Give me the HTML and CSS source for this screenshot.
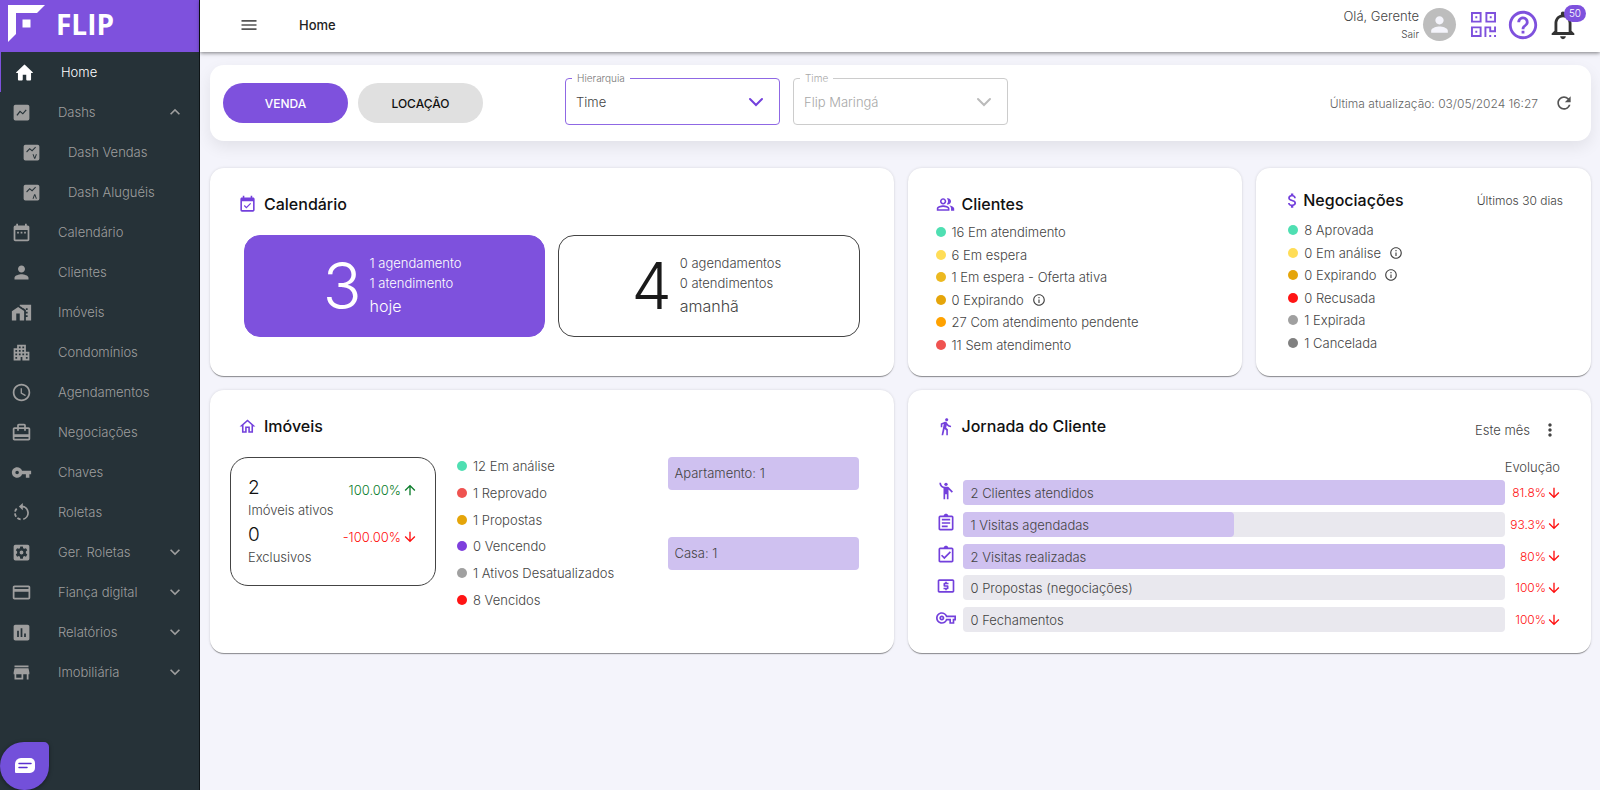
FILE: index.html
```html
<!DOCTYPE html>
<html lang="pt-BR">
<head>
  <meta charset="UTF-8" />
  <meta name="viewport" content="width=device-width, initial-scale=1" />
  <title>FLIP - Home</title>
  <link rel="stylesheet" href="styles.css">
</head>
<body>
  <!-- icons -->
  <svg class="sprite" aria-hidden="true">
    <symbol id="i-home" viewBox="0 0 24 24"><path d="M10 20v-5.500h4V20c0 .6.400 1 1 1h3.500c.6 0 1-.4 1-1v-7.500h1.600c.500 0 .7-.6.300-.9L12.700 3.300a1 1 0 0 0-1.400 0L2.600 11.600c-.4.300-.2.900.3.900h1.600V20c0 .6.400 1 1 1H9c.6 0 1-.4 1-1z"/></symbol>
    <symbol id="i-dash" viewBox="0 0 24 24"><path fill-rule="evenodd" d="M5 3h14a2 2 0 0 1 2 2v14a2 2 0 0 1-2 2H5a2 2 0 0 1-2-2V5a2 2 0 0 1 2-2zm2.400 12.600 3-4 3.200 2.700 4.300-4.900-1-.9-3.500 4-3.200-2.700-4 5.100z"/></symbol>
    <symbol id="i-dash-v" viewBox="0 0 24 24"><path fill-rule="evenodd" d="M5 3h14a2 2 0 0 1 2 2v14a2 2 0 0 1-2 2H5a2 2 0 0 1-2-2V5a2 2 0 0 1 2-2zm1.800 8.900 3.200-3.400 2.700 2.300 4.400-4.600-.8-.8-3.700 3.800-2.700-2.300L6 10.900zM13.200 14l1.900 5h1.200l1.900-5H17l-1.300 3.600-1.300-3.600z"/></symbol>
    <symbol id="i-dash-a" viewBox="0 0 24 24"><path fill-rule="evenodd" d="M5 3h14a2 2 0 0 1 2 2v14a2 2 0 0 1-2 2H5a2 2 0 0 1-2-2V5a2 2 0 0 1 2-2zm1.800 8.900 3.200-3.400 2.700 2.300 4.400-4.600-.8-.8-3.700 3.800-2.700-2.300L6 10.900zM13.200 19l1.900-5h1.200l1.900 5H17l-1.300-3.600-1.300 3.600z"/></symbol>
    <symbol id="i-calendar" viewBox="0 0 24 24"><path d="M9 11H7v2h2v-2zm4 0h-2v2h2v-2zm4 0h-2v2h2v-2zm2-7h-1V2h-2v2H8V2H6v2H5a2 2 0 0 0-2 2v14c0 1.100.9 2 2 2h14c1.100 0 2-.9 2-2V6c0-1.100-.9-2-2-2zm0 16H5V9h14v11z"/></symbol>
    <symbol id="i-person" viewBox="0 0 24 24"><path d="M12 12c2.210 0 4-1.790 4-4s-1.790-4-4-4-4 1.790-4 4 1.790 4 4 4zm0 2c-2.670 0-8 1.340-8 4v2h16v-2c0-2.660-5.330-4-8-4z"/></symbol>
    <symbol id="i-homework" viewBox="0 0 24 24"><path fill-rule="evenodd" d="M8.170 5.700 1 10.480V21h5v-8h4v8h5V10.250zM10 3v1.510l2 1.330L13.730 7H15v.850l2 1.340V11h2v2h-2v2h2v2h-2v4h6V3H10zm9 6h-2V7h2v2z"/></symbol>
    <symbol id="i-building" viewBox="0 0 24 24"><path d="M17 11V3H7v4H3v14h8v-4h2v4h8V11h-4zM7 19H5v-2h2v2zm0-4H5v-2h2v2zm0-4H5V9h2v2zm4 4H9v-2h2v2zm0-4H9V9h2v2zm0-4H9V5h2v2zm4 8h-2v-2h2v2zm0-4h-2V9h2v2zm0-4h-2V5h2v2zm4 12h-2v-2h2v2zm0-4h-2v-2h2v2z"/></symbol>
    <symbol id="i-clock" viewBox="0 0 24 24"><path d="M11.990 2C6.470 2 2 6.480 2 12s4.470 10 9.990 10C17.520 22 22 17.520 22 12S17.520 2 11.990 2zM12 20c-4.420 0-8-3.580-8-8s3.580-8 8-8 8 3.580 8 8-3.580 8-8 8zm.5-13H11v6l5.250 3.150.75-1.230-4.500-2.670z"/></symbol>
    <symbol id="i-bag" viewBox="0 0 24 24"><path d="M20 6h-3V4c0-1.110-.89-2-2-2H9c-1.110 0-2 .89-2 2v2H4c-1.110 0-2 .89-2 2v11c0 1.110.89 2 2 2h16c1.110 0 2-.89 2-2V8c0-1.110-.89-2-2-2zM9 4h6v2H9V4zm11 15H4v-2h16v2zm0-5H4V8h3v2h2V8h6v2h2V8h3v6z"/></symbol>
    <symbol id="i-key" viewBox="0 0 24 24"><path d="M12.650 10C11.830 7.670 9.610 6 7 6c-3.310 0-6 2.690-6 6s2.690 6 6 6c2.610 0 4.830-1.670 5.650-4H17v4h4v-4h2v-4H12.650zM7 14c-1.100 0-2-.9-2-2s.9-2 2-2 2 .9 2 2-.9 2-2 2z"/></symbol>
    <symbol id="i-rotate" viewBox="0 0 24 24"><g fill="none" stroke="currentColor" stroke-width="2"><path d="M12.500 5a7.500 7.500 0 0 1 1.500 14.700"/><path d="M11 19.900a7.500 7.500 0 0 1-6.500-7.400A7.500 7.500 0 0 1 7 7" stroke-dasharray="4 2"/></g><path d="M13.500 1v8.500L9 5.200z"/></symbol>
    <symbol id="i-gearbox" viewBox="0 0 24 24"><path fill-rule="evenodd" d="M5 3h14a2 2 0 0 1 2 2v14a2 2 0 0 1-2 2H5a2 2 0 0 1-2-2V5a2 2 0 0 1 2-2zm5.600 2-.4 2-1.200.7-2-.7-1.500 2.500 1.500 1.400v1.900l-1.500 1.400L7 16.800l2-.7 1.200.7.4 2.200h2.900l.4-2.200 1.200-.7 2 .7 1.500-2.600-1.600-1.400v-1.900L18.600 9.500 17.100 7l-2 .7-1.200-.7-.4-2zM12 9.800a2.200 2.200 0 1 1 0 4.400 2.200 2.200 0 0 1 0-4.400z"/></symbol>
    <symbol id="i-card" viewBox="0 0 24 24"><path d="M20 4H4c-1.110 0-2 .89-2 2v12c0 1.110.89 2 2 2h16c1.110 0 2-.89 2-2V6c0-1.110-.89-2-2-2zm0 14H4v-7h16v7zm0-10H4V6h16v2z"/></symbol>
    <symbol id="i-report" viewBox="0 0 24 24"><path d="M19 3H5c-1.100 0-2 .9-2 2v14c0 1.100.9 2 2 2h14c1.100 0 2-.9 2-2V5c0-1.100-.9-2-2-2zM9 17H7v-7h2v7zm4 0h-2V7h2v10zm4 0h-2v-4h2v4z"/></symbol>
    <symbol id="i-store" viewBox="0 0 24 24"><path d="M20 4H4v2h16V4zm1 10v-2l-1-5H4l-1 5v2h1v6h10v-6h4v6h2v-6h1zm-9 4H6v-4h6v4z"/></symbol>
    <symbol id="i-down" viewBox="0 0 24 24"><path d="M7.410 8.590 12 13.170l4.590-4.580L18 10l-6 6-6-6z"/></symbol>
    <symbol id="i-up" viewBox="0 0 24 24"><path d="M7.410 15.410 12 10.830l4.590 4.580L18 14l-6-6-6 6z"/></symbol>
    <symbol id="i-chevron" viewBox="0 0 24 24"><path d="m6 9 6 6 6-6" fill="none" stroke="currentColor" stroke-width="2" stroke-linecap="round"/></symbol>
    <symbol id="i-menu" viewBox="0 0 24 24"><path d="M3 18h18v-2H3v2zm0-5h18v-2H3v2zm0-7v2h18V6H3z"/></symbol>
    <symbol id="i-qr" viewBox="0 0 26 26"><g fill="none" stroke="currentColor" stroke-width="2"><path d="M1 1h9v9H1zM16 1h9v9h-9zM1 16h9v9H1zM15 26V16h5v4h5v-5"/></g><path d="M4.500 4.500h2v2h-2zM19.500 4.500h2v2h-2zM4.500 19.500h2v2h-2zM19 24h2v2h-2zM24 24h2v2h-2z"/></symbol>
    <symbol id="i-help" viewBox="0 0 24 24"><path d="M11 18h2v-2h-2v2zm1-16C6.480 2 2 6.480 2 12s4.480 10 10 10 10-4.480 10-10S17.520 2 12 2zm0 18c-4.410 0-8-3.590-8-8s3.590-8 8-8 8 3.590 8 8-3.590 8-8 8zm0-14c-2.210 0-4 1.790-4 4h2c0-1.100.9-2 2-2s2 .9 2 2c0 2-3 1.750-3 5h2c0-2.250 3-2.500 3-5 0-2.210-1.790-4-4-4z"/></symbol>
    <symbol id="i-bell" viewBox="0 0 24 24"><path d="M12 22c1.100 0 2-.9 2-2h-4c0 1.100.9 2 2 2zm6-6v-5c0-3.070-1.630-5.640-4.500-6.320V4c0-.83-.67-1.500-1.500-1.500s-1.500.67-1.500 1.500v.68C7.640 5.360 6 7.920 6 11v5l-2 2v1h16v-1l-2-2zm-2 1H8v-6c0-2.480 1.510-4.500 4-4.500s4 2.020 4 4.500v6z"/></symbol>
    <symbol id="i-refresh" viewBox="0 0 24 24"><path d="M17.650 6.350A7.958 7.958 0 0 0 12 4c-4.420 0-7.990 3.580-7.990 8s3.570 8 7.990 8c3.730 0 6.840-2.550 7.730-6h-2.080A5.990 5.990 0 0 1 12 18c-3.310 0-6-2.690-6-6s2.690-6 6-6c1.660 0 3.140.69 4.220 1.780L13 11h7V4l-2.350 2.350z"/></symbol>
    <symbol id="i-available" viewBox="0 0 24 24"><path d="m16.530 11.060-1.060-1.060-4.880 4.880-2.120-2.120-1.060 1.060L10.590 17l5.940-5.940zM19 3h-1V1h-2v2H8V1H6v2H5c-1.110 0-1.990.9-1.990 2L3 19a2 2 0 0 0 2 2h14c1.100 0 2-.9 2-2V5c0-1.100-.9-2-2-2zm0 16H5V8h14v11z"/></symbol>
    <symbol id="i-people" viewBox="0 0 24 24"><path d="M16.670 13.130C18.040 14.060 19 15.320 19 17v3h4v-3c0-2.180-3.570-3.470-6.330-3.870zM15 12c2.210 0 4-1.790 4-4s-1.790-4-4-4c-.47 0-.91.100-1.330.240a5.980 5.980 0 0 1 0 7.520c.42.140.86.240 1.330.240zM9 12c2.210 0 4-1.790 4-4s-1.790-4-4-4-4 1.790-4 4 1.790 4 4 4zm0-6c1.100 0 2 .9 2 2s-.9 2-2 2-2-.9-2-2 .9-2 2-2zM9 13c-2.670 0-8 1.340-8 4v3h16v-3c0-2.660-5.330-4-8-4zm6 5H3v-.99C3.200 16.290 6.300 15 9 15s5.800 1.290 6 2v1z"/></symbol>
    <symbol id="i-money" viewBox="0 0 24 24"><path d="M11.800 10.900c-2.270-.59-3-1.200-3-2.150 0-1.090 1.010-1.850 2.700-1.850 1.780 0 2.440.85 2.500 2.100h2.210c-.07-1.720-1.120-3.300-3.210-3.810V3h-3v2.160c-1.940.42-3.500 1.680-3.500 3.610 0 2.310 1.910 3.460 4.700 4.130 2.500.6 3 1.480 3 2.410 0 .69-.49 1.790-2.700 1.790-2.060 0-2.870-.92-2.980-2.100h-2.200c.12 2.190 1.760 3.420 3.680 3.830V21h3v-2.150c1.950-.37 3.500-1.500 3.500-3.550 0-2.840-2.430-3.810-4.700-4.400z"/></symbol>
    <symbol id="i-info" viewBox="0 0 24 24"><path d="M11 7h2v2h-2zm0 4h2v6h-2zm1-9C6.480 2 2 6.480 2 12s4.480 10 10 10 10-4.480 10-10S17.520 2 12 2zm0 18c-4.410 0-8-3.590-8-8s3.590-8 8-8 8 3.590 8 8-3.590 8-8 8z"/></symbol>
    <symbol id="i-house" viewBox="0 0 24 24"><path d="M12 3 2 12h3v8h6v-6h2v6h6v-8h3L12 3zm5 15h-2v-6H9v6H7v-7.810l5-4.500 5 4.500V18z"/></symbol>
    <symbol id="i-walk" viewBox="0 0 24 24"><path d="M13.500 5.500c1.100 0 2-.9 2-2s-.9-2-2-2-2 .9-2 2 .9 2 2 2zM9.800 8.900 7 23h2.100l1.800-8 2.100 2v6h2v-7.500l-2.100-2 .6-3C14.800 12 16.800 13 19 13v-2c-1.900 0-3.500-1-4.300-2.400l-1-1.600c-.4-.6-1-1-1.700-1-.3 0-.5.100-.8.100L6 8.300V13h2V9.600l1.800-.7"/></symbol>
    <symbol id="i-wave" viewBox="0 0 24 24"><circle cx="12" cy="4" r="2"/><path d="M15.890 8.110C15.500 7.720 14.830 7 13.530 7h-2.540C8.240 6.990 6 4.750 6 2H4c0 3.160 2.110 5.840 5 6.710V22h2v-6h2v6h2V10.050L18.950 14l1.410-1.410-4.470-4.480z"/></symbol>
    <symbol id="i-clip" viewBox="0 0 24 24"><path d="M7 15h7v2H7zm0-4h10v2H7zm0-4h10v2H7zm12-4h-4.180C14.400 1.840 13.300 1 12 1s-2.400.84-2.820 2H5a2 2 0 0 0-2 2v14c0 1.100.9 2 2 2h14c1.100 0 2-.9 2-2V5c0-1.100-.9-2-2-2zm0 16H5V5h14v14z"/></symbol>
    <symbol id="i-clipcheck" viewBox="0 0 24 24"><path d="M19 3h-4.180C14.400 1.840 13.300 1 12 1s-2.400.84-2.820 2H5a2 2 0 0 0-2 2v14c0 1.100.9 2 2 2h14c1.100 0 2-.9 2-2V5c0-1.100-.9-2-2-2zm0 16H5V5h14v14zM17.990 9l-1.410-1.420-6.590 6.590-2.580-2.570-1.420 1.410 4 3.990z"/></symbol>
    <symbol id="i-cash" viewBox="0 0 24 24"><path d="M11 17h2v-1h1c.55 0 1-.45 1-1v-3c0-.55-.45-1-1-1h-3v-1h4V8h-2V7h-2v1h-1c-.55 0-1 .45-1 1v3c0 .55.45 1 1 1h3v1H9v2h2v1zm9-13H4c-1.110 0-2 .89-2 2v12c0 1.110.89 2 2 2h16c1.110 0 2-.89 2-2V6c0-1.110-.89-2-2-2zm0 14H4V6h16v12z"/></symbol>
    <symbol id="i-keyline" viewBox="0 0 24 24"><path d="M22 19h-6v-4h-2.680c-1.140 2.420-3.600 4-6.320 4-3.860 0-7-3.140-7-7s3.140-7 7-7c2.720 0 5.170 1.580 6.320 4H24v6h-2v4zm-4-2h2v-4h2v-2H11.940l-.23-.67C11.010 8.340 9.110 7 7 7c-2.760 0-5 2.240-5 5s2.240 5 5 5c2.110 0 4.010-1.340 4.710-3.330l.23-.67H18v4zM7 15c-1.650 0-3-1.350-3-3s1.350-3 3-3 3 1.350 3 3-1.350 3-3 3zm0-4c-.55 0-1 .45-1 1s.45 1 1 1 1-.45 1-1-.45-1-1-1z"/></symbol>
    <symbol id="i-arrow-up" viewBox="0 0 24 24"><path d="m4 12 1.410 1.410L11 7.830V20h2V7.830l5.580 5.590L20 12l-8-8-8 8z"/></symbol>
    <symbol id="i-arrow-down" viewBox="0 0 24 24"><path d="m20 12-1.410-1.410L13 16.170V4h-2v12.170l-5.580-5.590L4 12l8 8 8-8z"/></symbol>
    <symbol id="i-more" viewBox="0 0 24 24"><path d="M12 8c1.100 0 2-.9 2-2s-.9-2-2-2-2 .9-2 2 .9 2 2 2zm0 2c-1.100 0-2 .9-2 2s.9 2 2 2 2-.9 2-2-.9-2-2-2zm0 6c-1.100 0-2 .9-2 2s.9 2 2 2 2-.9 2-2-.9-2-2-2z"/></symbol>
  </svg>

  <aside class="sidebar">
    <a class="logo" href="#" aria-label="FLIP">
      <svg class="logo-mark" viewBox="0 0 38 38"><path fill="#fff" d="M0 0h37l-8 8H8v21l-8 8zM14.500 14.500h8v8h-8z"/></svg>
      <span>FLIP</span>
    </a>
    <nav class="menu">
      <a class="item active" href="#"><svg class="icon"><use href="#i-home"/></svg><span>Home</span></a>
      <button class="item" type="button"><svg class="icon"><use href="#i-dash"/></svg><span>Dashs</span><svg class="arrow"><use href="#i-up"/></svg></button>
      <a class="item sub" href="#"><svg class="icon"><use href="#i-dash-v"/></svg><span>Dash Vendas</span></a>
      <a class="item sub" href="#"><svg class="icon"><use href="#i-dash-a"/></svg><span>Dash Aluguéis</span></a>
      <a class="item" href="#"><svg class="icon"><use href="#i-calendar"/></svg><span>Calendário</span></a>
      <a class="item" href="#"><svg class="icon"><use href="#i-person"/></svg><span>Clientes</span></a>
      <a class="item" href="#"><svg class="icon"><use href="#i-homework"/></svg><span>Imóveis</span></a>
      <a class="item" href="#"><svg class="icon"><use href="#i-building"/></svg><span>Condomínios</span></a>
      <a class="item" href="#"><svg class="icon"><use href="#i-clock"/></svg><span>Agendamentos</span></a>
      <a class="item" href="#"><svg class="icon"><use href="#i-bag"/></svg><span>Negociações</span></a>
      <a class="item" href="#"><svg class="icon"><use href="#i-key"/></svg><span>Chaves</span></a>
      <a class="item" href="#"><svg class="icon"><use href="#i-rotate"/></svg><span>Roletas</span></a>
      <button class="item" type="button"><svg class="icon"><use href="#i-gearbox"/></svg><span>Ger. Roletas</span><svg class="arrow"><use href="#i-down"/></svg></button>
      <button class="item" type="button"><svg class="icon"><use href="#i-card"/></svg><span>Fiança digital</span><svg class="arrow"><use href="#i-down"/></svg></button>
      <button class="item" type="button"><svg class="icon"><use href="#i-report"/></svg><span>Relatórios</span><svg class="arrow"><use href="#i-down"/></svg></button>
      <button class="item" type="button"><svg class="icon"><use href="#i-store"/></svg><span>Imobiliária</span><svg class="arrow"><use href="#i-down"/></svg></button>
    </nav>
  </aside>

  <div class="page">
    <header class="topbar">
      <button class="icon-btn" type="button" aria-label="Menu"><svg class="menu-icon"><use href="#i-menu"/></svg></button>
      <h1>Home</h1>
      <div class="user">
        <span>Olá, Gerente</span>
        <a href="#">Sair</a>
      </div>
      <div class="avatar"><svg><use href="#i-person"/></svg></div>
      <button class="icon-btn qr" type="button" aria-label="QR Code"><svg><use href="#i-qr"/></svg></button>
      <button class="icon-btn help" type="button" aria-label="Ajuda"><svg><use href="#i-help"/></svg></button>
      <button class="icon-btn bell" type="button" aria-label="Notificações"><svg><use href="#i-bell"/></svg><span class="badge">50</span></button>
    </header>

    <main>
      <section class="filters">
        <button class="pill selected" type="button">VENDA</button>
        <button class="pill" type="button">LOCAÇÃO</button>
        <div class="fields">
          <div class="field">
            <label for="hierarquia">Hierarquia</label>
            <select id="hierarquia"><option>Time</option></select>
            <svg><use href="#i-chevron"/></svg>
          </div>
          <div class="field disabled">
            <label for="time">Time</label>
            <select id="time" disabled><option>Flip Maringá</option></select>
            <svg><use href="#i-chevron"/></svg>
          </div>
        </div>
        <span class="updated">Última atualização: 03/05/2024 16:27</span>
        <button class="icon-btn refresh" type="button" aria-label="Atualizar"><svg><use href="#i-refresh"/></svg></button>
      </section>

      <div class="grid">
        <section class="card wide">
          <h2><svg><use href="#i-available"/></svg>Calendário</h2>
          <div class="days">
            <div class="day today">
              <strong>3</strong>
              <div><p>1 agendamento</p><p>1 atendimento</p><p class="when">hoje</p></div>
            </div>
            <div class="day">
              <strong>4</strong>
              <div><p>0 agendamentos</p><p>0 atendimentos</p><p class="when">amanhã</p></div>
            </div>
          </div>
        </section>

        <section class="card">
          <h2><svg><use href="#i-people"/></svg>Clientes</h2>
          <ul class="status">
            <li><i class="dot green"></i>16 Em atendimento</li>
            <li><i class="dot yellow"></i>6 Em espera</li>
            <li><i class="dot gold"></i>1 Em espera - Oferta ativa</li>
            <li><i class="dot mustard"></i>0 Expirando <svg><use href="#i-info"/></svg></li>
            <li><i class="dot orange"></i>27 Com atendimento pendente</li>
            <li><i class="dot coral"></i>11 Sem atendimento</li>
          </ul>
        </section>

        <section class="card deals">
          <div class="card-head">
            <h2><svg><use href="#i-money"/></svg>Negociações</h2>
            <span>Últimos 30 dias</span>
          </div>
          <ul class="status">
            <li><i class="dot green"></i>8 Aprovada</li>
            <li><i class="dot yellow"></i>0 Em análise <svg><use href="#i-info"/></svg></li>
            <li><i class="dot mustard"></i>0 Expirando <svg><use href="#i-info"/></svg></li>
            <li><i class="dot red"></i>0 Recusada</li>
            <li><i class="dot grey"></i>1 Expirada</li>
            <li><i class="dot dark"></i>1 Cancelada</li>
          </ul>
        </section>

        <section class="card wide lower">
          <h2><svg><use href="#i-house"/></svg>Imóveis</h2>
          <div class="properties">
            <div class="totals">
              <div class="total"><span><b>2</b>Imóveis ativos</span><em class="up">100.00%<svg><use href="#i-arrow-up"/></svg></em></div>
              <div class="total"><span><b>0</b>Exclusivos</span><em class="down">-100.00%<svg><use href="#i-arrow-down"/></svg></em></div>
            </div>
            <ul class="status tall">
              <li><i class="dot green"></i>12 Em análise</li>
              <li><i class="dot coral"></i>1 Reprovado</li>
              <li><i class="dot mustard"></i>1 Propostas</li>
              <li><i class="dot purple"></i>0 Vencendo</li>
              <li><i class="dot grey"></i>1 Ativos Desatualizados</li>
              <li><i class="dot red"></i>8 Vencidos</li>
            </ul>
            <div class="types">
              <div class="type">Apartamento: 1</div>
              <div class="type">Casa: 1</div>
            </div>
          </div>
        </section>

        <section class="card wide lower">
          <div class="card-head">
            <h2><svg><use href="#i-walk"/></svg>Jornada do Cliente</h2>
            <div class="period">Este mês <button class="icon-btn" type="button" aria-label="Opções"><svg><use href="#i-more"/></svg></button></div>
          </div>
          <p class="evolution">Evolução</p>
          <ol class="journey">
            <li><svg class="step"><use href="#i-wave"/></svg><div class="track"><div class="bar" style="width: 100%"></div><span>2 Clientes atendidos</span></div><em class="down">81.8%<svg><use href="#i-arrow-down"/></svg></em></li>
            <li><svg class="step"><use href="#i-clip"/></svg><div class="track"><div class="bar" style="width: 50%"></div><span>1 Visitas agendadas</span></div><em class="down">93.3%<svg><use href="#i-arrow-down"/></svg></em></li>
            <li><svg class="step"><use href="#i-clipcheck"/></svg><div class="track"><div class="bar" style="width: 100%"></div><span>2 Visitas realizadas</span></div><em class="down">80%<svg><use href="#i-arrow-down"/></svg></em></li>
            <li><svg class="step"><use href="#i-cash"/></svg><div class="track"><div class="bar" style="width: 0%"></div><span>0 Propostas (negociações)</span></div><em class="down">100%<svg><use href="#i-arrow-down"/></svg></em></li>
            <li><svg class="step"><use href="#i-keyline"/></svg><div class="track"><div class="bar" style="width: 0%"></div><span>0 Fechamentos</span></div><em class="down">100%<svg><use href="#i-arrow-down"/></svg></em></li>
          </ol>
        </section>
      </div>
    </main>
  </div>

  <button class="chat" type="button" aria-label="Chat">
    <svg viewBox="0 0 20 16"><path fill="#fff" d="M6 0h9a5 5 0 0 1 5 5v5a5 5 0 0 1-5 5H1a1 1 0 0 1-1-1V6a6 6 0 0 1 6-6z"/><path stroke="#5a2fd0" stroke-width="1.500" stroke-linecap="round" d="M4 5.500h12M4 9.500h8"/></svg>
  </button>
</body>
</html>
```
FILE: styles.css
```css
* {
  box-sizing: border-box;
}
body {
  margin: 0;
  display: flex;
  min-height: 100vh;
  background: #f4f4fb;
  color: #444;
  font-family: Inter, "Open Sans", sans-serif;
  font-size: 13px;
  font-weight: 300;
}
h1, h2, p, ul, ol {
  margin: 0;
  padding: 0;
}
ul, ol {
  list-style: none;
}
a {
  color: inherit;
  text-decoration: none;
}
button, select {
  font: inherit;
  color: inherit;
}
button {
  border: none;
  background: none;
  padding: 0;
  cursor: pointer;
}
em {
  font-style: normal;
}
svg {
  fill: currentColor;
  flex-shrink: 0;
}
.sprite {
  position: absolute;
  width: 0;
  height: 0;
}
.icon-btn {
  display: flex;
}

/* sidebar */
.sidebar {
  width: 200px;
  flex-shrink: 0;
  background: #263238;
  border-right: 1px solid #0e1417;
}
.logo {
  display: flex;
  align-items: center;
  gap: 10px;
  height: 52px;
  padding: 0 8px 4px;
  background: #7e51dd;
  color: #fff;
  font-family: "Open Sans", sans-serif;
  font-size: 28px;
  font-weight: 700;
}
.logo-mark {
  width: 38px;
  height: 38px;
}
.item {
  display: flex;
  align-items: center;
  gap: 26px;
  width: 100%;
  height: 40px;
  padding: 0 14px 0 11px;
  color: #9e9e9e;
  text-align: left;
}
.item.active {
  border-left: 1px solid #7e51dd;
  padding-left: 13px;
  color: #fff;
}
.item.sub {
  padding-left: 21px;
}
.icon {
  width: 21px;
  height: 21px;
}
.arrow {
  width: 20px;
  height: 20px;
  margin-left: auto;
}

/* top bar */
.page {
  flex: 1;
  min-width: 0;
}
.topbar {
  display: flex;
  align-items: center;
  height: 52px;
  padding: 0 20px 3px 39px;
  background: #fff;
  box-shadow: 0 1px 4px rgba(0, 0, 0, 0.5);
}
.menu-icon {
  width: 20px;
  height: 20px;
  color: #555;
}
h1 {
  margin-left: 40px;
  font-size: 13px;
  font-weight: 500;
  color: #222;
}
.user {
  display: flex;
  flex-direction: column;
  align-items: flex-end;
  gap: 2px;
  margin-left: auto;
  line-height: 16px;
}
.user a {
  font-size: 10px;
}
.avatar {
  display: flex;
  align-items: center;
  justify-content: center;
  width: 33px;
  height: 33px;
  margin: 0 15px 0 4px;
  border-radius: 50%;
  background: #bdbdbd;
  color: #f4f4fb;
}
.avatar svg {
  width: 25px;
  height: 25px;
}
.qr, .help {
  color: #7e51dd;
}
.qr svg {
  width: 25px;
  height: 25px;
}
.help svg {
  width: 34px;
  height: 34px;
}
.help {
  margin-left: 10px;
}
.bell {
  position: relative;
  margin-left: 6px;
  color: #333;
}
.bell svg {
  width: 34px;
  height: 34px;
}
.badge {
  position: absolute;
  top: -3px;
  right: -6px;
  padding: 0 5px;
  border-radius: 9px;
  background: #7e51dd;
  color: #fff;
  font-size: 10px;
  line-height: 17px;
}

/* filters */
main {
  padding: 13px 9px 20px 10px;
}
.filters {
  display: flex;
  align-items: center;
  gap: 10px;
  height: 76px;
  padding: 0 17px 0 13px;
  border-radius: 14px;
  background: #fff;
  box-shadow: 0 6px 16px rgba(0, 0, 0, 0.08);
}
.pill {
  width: 125px;
  height: 40px;
  border-radius: 20px;
  background: #e0e0e0;
  color: #111;
  font-size: 12px;
  font-weight: 500;
}
.pill.selected {
  background: #7e51dd;
  color: #fff;
}
.fields {
  display: flex;
  gap: 13px;
  margin: 0 0 3px 72px;
}
.field {
  position: relative;
  color: #444;
}
.field label {
  position: absolute;
  top: -6px;
  left: 7px;
  padding: 0 5px;
  background: #fff;
  color: #777;
  font-size: 10px;
  line-height: 12px;
}
.field select {
  display: block;
  width: 215px;
  height: 47px;
  padding: 0 10px;
  border: 1px solid #8f68e4;
  border-radius: 4px;
  background: #fff;
  appearance: none;
}
.field svg {
  position: absolute;
  top: 12px;
  right: 12px;
  width: 24px;
  height: 24px;
  color: #7340dc;
  pointer-events: none;
}
.field.disabled label, .field.disabled select {
  color: #a8a8a8;
  opacity: 1;
}
.field.disabled select {
  border-color: #ccc;
}
.field.disabled svg {
  color: #bbb;
}
.updated {
  margin-left: auto;
  color: #666;
  font-size: 12px;
}
.refresh {
  margin-left: 6px;
  color: #555;
}
.refresh svg {
  width: 20px;
  height: 20px;
}

/* cards */
.grid {
  display: grid;
  grid-template-columns: repeat(4, 1fr);
  gap: 14px;
  margin-top: 27px;
}
.card {
  padding: 25px 28px 20px;
  border-radius: 14px;
  background: #fff;
  box-shadow: 0 2px 1px -1px rgba(0, 0, 0, 0.3), 0 1px 1px rgba(0, 0, 0, 0.14), 0 0 3px rgba(0, 0, 0, 0.12);
}
.wide {
  grid-column: span 2;
}
.lower {
  padding: 25px 31px 14px 28px;
}
h2 {
  display: flex;
  align-items: center;
  gap: 7px;
  height: 22px;
  color: #111;
  font-size: 16px;
  font-weight: 500;
}
h2 svg {
  width: 19px;
  height: 19px;
  color: #7340dc;
}
.card-head {
  display: flex;
  align-items: center;
  justify-content: space-between;
  height: 22px;
}
.days {
  display: grid;
  grid-template-columns: 1fr 1fr;
  gap: 13px;
  margin: 20px 6px 0;
}
.day {
  display: flex;
  align-items: center;
  justify-content: center;
  gap: 8px;
  height: 102px;
  padding: 0 5px 1px 0;
  border: 1px solid #444;
  border-radius: 16px;
  line-height: 20px;
}
.day strong {
  color: #1a1a1a;
  font-size: 64px;
  font-weight: 300;
}
.when {
  font-size: 16px;
  line-height: 26px;
}
.today {
  border-color: #7e51dd;
  background: #7e51dd;
  color: #fff;
}
.today strong {
  color: #fff;
}
.status {
  display: grid;
  grid-auto-rows: 1fr;
  height: 135px;
  margin-top: 6px;
}
.status li {
  display: flex;
  align-items: center;
}
.status svg {
  width: 14px;
  height: 14px;
  margin-left: 8px;
}
.dot {
  width: 10px;
  height: 10px;
  margin-right: 6px;
  border-radius: 50%;
}
.green { background: #4fdfb2; }
.yellow { background: #ffdd57; }
.gold { background: #ecb920; }
.mustard { background: #e5a50a; }
.orange { background: #ffa200; }
.coral { background: #ef5350; }
.red { background: #ff1414; }
.purple { background: #7e3fdd; }
.grey { background: #a0a0a0; }
.dark { background: #808080; }
.deals {
  padding: 21px 28px 20px 32px;
}
.deals h2 {
  gap: 1px;
  margin-left: -5px;
}
.deals .status {
  margin-top: 8px;
}
.deals .card-head span {
  font-size: 12px;
}

/* properties */
.properties {
  display: flex;
  margin: 20px 4px 0 -8px;
}
.totals {
  width: 206px;
  height: 129px;
  padding: 19px 17px;
  border: 1px solid #444;
  border-radius: 18px;
}
.total {
  display: flex;
  justify-content: space-between;
  height: 47px;
  line-height: 22px;
}
.total b {
  display: block;
  color: #111;
  font-size: 19px;
  font-weight: 300;
}
em {
  display: flex;
  align-items: center;
  justify-content: flex-end;
  gap: 1px;
}
.total em {
  height: 26px;
}
em svg {
  width: 16px;
  height: 16px;
}
.up {
  color: #0b7d2b;
}
.down {
  color: #ff1010;
}
.tall {
  height: 160px;
  margin: -4px 0 0 21px;
}
.types {
  display: flex;
  flex-direction: column;
  gap: 47px;
  width: 191px;
  margin-left: auto;
}
.type {
  padding: 0 7px;
  border-radius: 4px;
  background: #cfc1f0;
  line-height: 33px;
}

/* journey */
.period {
  display: flex;
  align-items: center;
  gap: 10px;
  padding-top: 8px;
}
.period svg {
  width: 20px;
  height: 20px;
}
.evolution {
  margin-top: 20px;
  line-height: 20px;
  text-align: right;
}
.journey {
  display: grid;
  grid-auto-rows: 1fr;
  height: 159px;
  margin-top: 3px;
}
.journey li {
  display: grid;
  grid-template-columns: 20px 1fr 50px;
  column-gap: 7px;
  align-items: start;
  margin-right: -2px;
}
.journey em {
  gap: 0;
  height: 25px;
  font-size: 12px;
}
.step {
  width: 20px;
  height: 22px;
  color: #7340dc;
}
.track {
  position: relative;
  border-radius: 4px;
  background: #e9e8ee;
}
.bar {
  height: 25px;
  border-radius: 4px;
  background: #cfc1f0;
}
.track span {
  position: absolute;
  left: 8px;
  top: 0;
  line-height: 27px;
}

.chat {
  position: fixed;
  left: 0;
  bottom: 0;
  display: flex;
  align-items: center;
  justify-content: center;
  width: 49px;
  height: 48px;
  border-radius: 24px 5px 24px 24px;
  background: #7350da;
  box-shadow: 0 1px 4px rgba(0, 0, 0, 0.4);
}
.chat svg {
  width: 20px;
  height: 16px;
}
```
